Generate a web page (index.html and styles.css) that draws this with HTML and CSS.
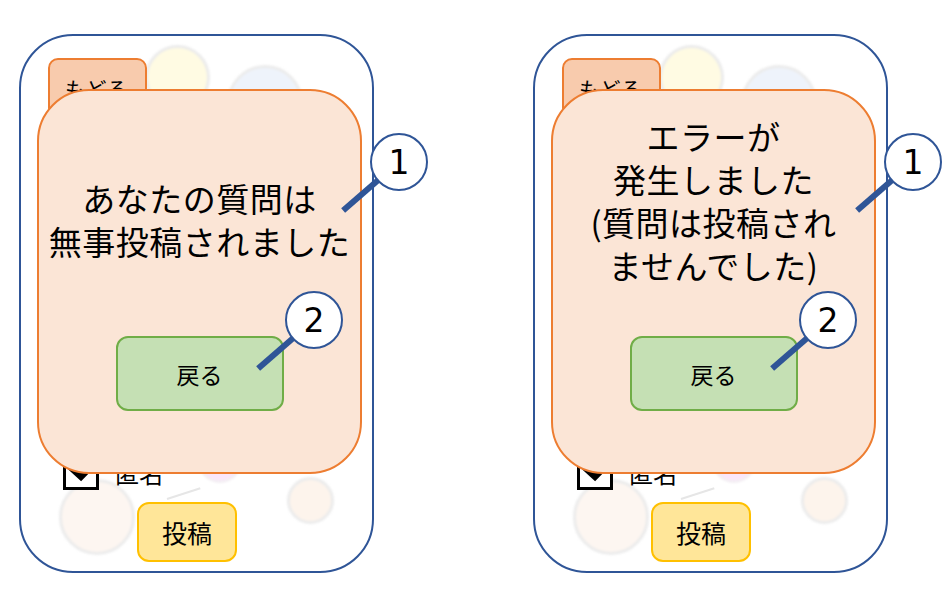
FILE: index.html
```html
<!DOCTYPE html>
<html lang="ja">
<head>
    <meta charset="UTF-8">
    <meta name="viewport" content="width=device-width, initial-scale=1.0">
    <title>質問投稿 - 結果画面</title>
    <link rel="stylesheet" href="styles.css">
</head>
<body>

<div class="board">

    <!-- 投稿成功 -->
    <div class="phone">
        <div class="backdrop">
            <span class="blob blob-yellow"></span>
            <span class="blob blob-blue"></span>
            <span class="blob blob-pink"></span>
            <span class="blob blob-beige-lg"></span>
            <span class="blob blob-beige-sm"></span>
            <span class="bond"></span>
        </div>
        <button class="back-btn">もどる</button>
        <div class="phone-bottom">
            <label class="anon">
                <span class="checkbox">
                    <svg viewBox="0 0 30 30" width="30" height="30"><polyline points="4,10 15,20 26,9" fill="none" stroke="#000" stroke-width="6"/></svg>
                </span>
                匿名
            </label>
            <button class="post-btn">投稿</button>
        </div>
        <div class="dialog">
            <p class="dialog-text dialog-text-ok">あなたの質問は<br>無事投稿されました</p>
            <button class="return-btn">戻る</button>
        </div>
        <div class="callout callout-1"><span class="callout-line"></span><span class="callout-num">1</span></div>
        <div class="callout callout-2"><span class="callout-line"></span><span class="callout-num">2</span></div>
    </div>

    <!-- 投稿失敗 -->
    <div class="phone">
        <div class="backdrop">
            <span class="blob blob-yellow"></span>
            <span class="blob blob-blue"></span>
            <span class="blob blob-pink"></span>
            <span class="blob blob-beige-lg"></span>
            <span class="blob blob-beige-sm"></span>
            <span class="bond"></span>
        </div>
        <button class="back-btn">もどる</button>
        <div class="phone-bottom">
            <label class="anon">
                <span class="checkbox">
                    <svg viewBox="0 0 30 30" width="30" height="30"><polyline points="4,10 15,20 26,9" fill="none" stroke="#000" stroke-width="6"/></svg>
                </span>
                匿名
            </label>
            <button class="post-btn">投稿</button>
        </div>
        <div class="dialog">
            <p class="dialog-text dialog-text-error">エラーが<br>発生しました<br>(質問は投稿され<br>ませんでした)</p>
            <button class="return-btn">戻る</button>
        </div>
        <div class="callout callout-1"><span class="callout-line"></span><span class="callout-num">1</span></div>
        <div class="callout callout-2"><span class="callout-line"></span><span class="callout-num">2</span></div>
    </div>

</div>

</body>
</html>
```

FILE: styles.css
```css
body {
    margin: 0;
    background: #ffffff;
    font-family: "Noto Sans CJK JP", "Noto Sans", sans-serif;
    color: #000000;
}
.board {
    display: flex;
    gap: 159px;
    padding: 34px 0 0 19px;
}
.phone {
    position: relative;
    box-sizing: border-box;
    width: 355px;
    height: 539px;
    border: 2px solid #2f5597;
    border-radius: 54px;
    display: flex;
    flex-direction: column;
    align-items: flex-start;
    padding: 22px 0 0 27px;
}

/* faded picture behind the screen */
.backdrop {
    position: absolute;
    inset: 0;
    overflow: hidden;
    border-radius: 52px;
}
.blob {
    position: absolute;
    box-sizing: border-box;
    border-radius: 50%;
    border: 3px solid #ececec;
    filter: blur(1px);
}
.blob-yellow { left: 124px; top: 9px; width: 65px; height: 65px; background: #fffbe3; }
.blob-blue { left: 206px; top: 29px; width: 76px; height: 76px; background: #eef3fb; }
.blob-pink { left: 177px; top: 403px; width: 44px; height: 44px; background: #fbe6fb; border-color: #f3eef3; }
.blob-beige-lg { left: 38px; top: 443px; width: 76px; height: 76px; background: #fdf6f1; }
.blob-beige-sm { left: 266px; top: 441px; width: 47px; height: 47px; background: #fdf4ec; }
.bond {
    position: absolute;
    left: 146px;
    top: 462px;
    width: 35px;
    height: 2px;
    background: #e6e6e6;
    transform-origin: 0 50%;
    transform: rotate(-18deg);
}

.back-btn {
    position: relative;
    box-sizing: border-box;
    width: 99px;
    height: 60px;
    background: #f8cbad;
    border: 2px solid #ed7d31;
    border-radius: 10px;
    font-family: inherit;
    font-size: 21px;
    text-align: left;
    padding: 0 0 0 15px;
}
.phone-bottom {
    position: relative;
    margin-top: auto;
    display: flex;
    flex-direction: column;
    gap: 12px;
    padding-bottom: 9px;
}
.anon {
    display: flex;
    align-items: center;
    gap: 16px;
    margin-left: 15px;
    font-size: 24px;
}
.checkbox {
    box-sizing: border-box;
    width: 36px;
    height: 36px;
    border: 3px solid #000000;
    display: flex;
    align-items: center;
    justify-content: center;
    background: #ffffff;
}
.post-btn {
    box-sizing: border-box;
    margin-left: 89px;
    width: 100px;
    height: 60px;
    background: #ffe699;
    border: 2px solid #ffc000;
    border-radius: 12px;
    font-family: inherit;
    font-size: 25px;
    padding: 0;
}

/* result dialog */
.dialog {
    position: absolute;
    left: 16px;
    top: 53px;
    box-sizing: border-box;
    width: 325px;
    height: 385px;
    background: #fbe5d6;
    border: 2px solid #ed7d31;
    border-radius: 52px;
    display: flex;
    flex-direction: column;
    align-items: center;
    padding-bottom: 61px;
}
.dialog-text {
    margin: 0;
    font-size: 33px;
    line-height: 43px;
    letter-spacing: 0.5px;
    text-align: center;
}
.dialog-text-ok {
    margin-top: 86px;
}
.dialog-text-error {
    margin-top: 24px;
}
.return-btn {
    margin-top: auto;
    box-sizing: border-box;
    width: 168px;
    height: 75px;
    background: #c5e0b4;
    border: 2px solid #70ad47;
    border-radius: 12px;
    font-family: inherit;
    font-size: 23px;
    padding: 0;
}

/* numbered annotations */
.callout {
    position: absolute;
    width: 58px;
    height: 58px;
}
.callout-1 { left: 349px; top: 97px; }
.callout-2 { left: 264px; top: 255px; }
.callout-line {
    position: absolute;
    left: 29px;
    top: 26px;
    width: 74px;
    height: 6px;
    background: #2f5597;
    transform-origin: 0 50%;
    transform: rotate(139deg);
}
.callout-num {
    position: absolute;
    inset: 0;
    box-sizing: border-box;
    border: 2px solid #2f5597;
    border-radius: 50%;
    background: #ffffff;
    display: flex;
    align-items: center;
    justify-content: center;
    font-family: "DejaVu Sans", sans-serif;
    font-size: 33px;
}
```
